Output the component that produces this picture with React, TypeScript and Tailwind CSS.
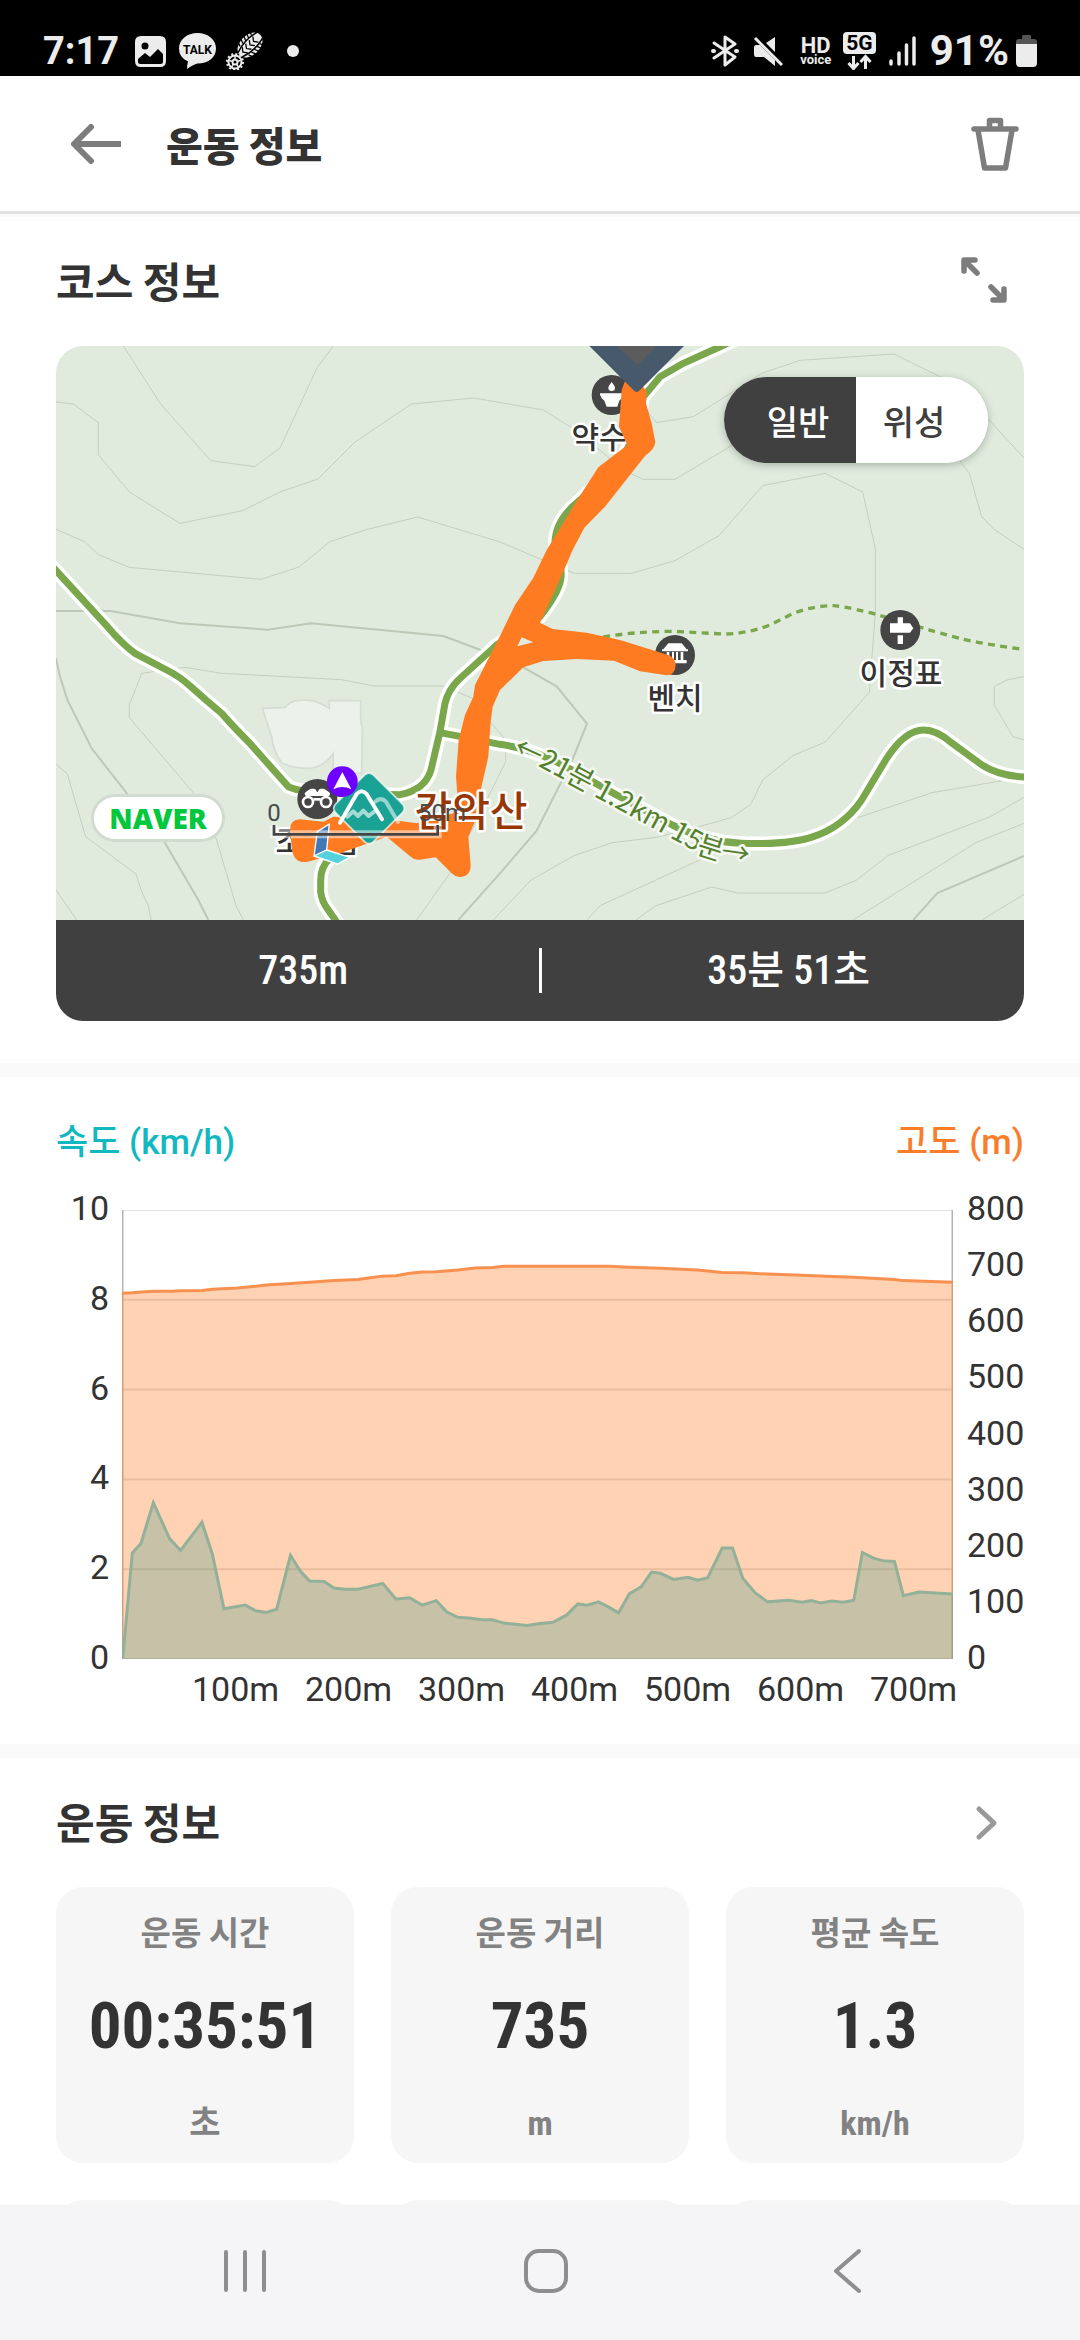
import { useState } from "react";

const hangul = "font-['Noto_Sans_CJK_KR',sans-serif]";
const narrow = "font-['Roboto_Condensed','Liberation_Sans_Narrow','Noto_Sans_CJK_KR',sans-serif]";

function StatusBar() {
  return (
    <div className="flex h-[76px] shrink-0 items-center justify-between bg-black pt-[26px] pr-[43px] pl-[43px] font-['Roboto',sans-serif] text-[#ececec]">
      <div className="flex items-center">
        <span className="w-[76px] text-[38px] leading-none font-bold">7:17</span>
        <svg className="ml-[16px] size-[31px]" viewBox="0 0 31 31" aria-label="사진">
          <path fillRule="evenodd" fill="#ececec" d="M6 0H25Q31 0 31 6V25Q31 31 25 31H6Q0 31 0 25V6Q0 0 6 0ZM10 6.500A3.500 3.500 0 1 0 10 13.500A3.500 3.500 0 1 0 10 6.500ZM3 23V25.500Q3 28 5.500 28H25.500Q28 28 28 25.500V18L23 13L15 21L10 17Z" />
        </svg>
        <svg className="ml-[13px] h-[36px] w-[37px]" viewBox="0 0 37 36" aria-label="카카오톡">
          <path fill="#ececec" d="M18.500 0C29 0 37 6.500 37 15.500S29 30.500 18.500 30.500Q14 31.500 8 36Q8 32 9 28.500Q0 24.500 0 15.500C0 6.500 8 0 18.500 0Z" />
          <text x="18.500" y="20.500" textAnchor="middle" fontSize="12" fontWeight="700" fill="#000" fontFamily="Roboto, sans-serif">TALK</text>
        </svg>
        <svg className="ml-[10px] h-[38px] w-[38px]" viewBox="0 0 38 38" fill="none" stroke="#ececec" aria-label="등산">
          <g transform="rotate(45 24 13)">
            <ellipse cx="24" cy="13" rx="10" ry="14.500" fill="#ececec" stroke="none" />
            <path d="M20 -1Q16 13 21 27M28 -1Q32 13 27 27" stroke="#000" strokeWidth="1.500" />
            <path d="M13 3L18 5M13 7L18 9M13 11L18 13M13 15L18 17M13 19L18 21M35 3L30 5M35 7L30 9M35 11L30 13M35 15L30 17M35 19L30 21" stroke="#000" strokeWidth="1.300" />
            <path d="M20 5L24 8L28 5M20 10L24 13L28 10M20 15L24 18L28 15M20 20L24 23L28 20" stroke="#000" strokeWidth="1.300" />
          </g>
          <circle cx="9" cy="30" r="6.500" strokeWidth="2" />
          <circle cx="9" cy="30" r="8" strokeWidth="2" strokeDasharray="2 2.200" />
          <circle cx="9" cy="30" r="2.500" strokeWidth="2" />
          <path d="M9 24V27M3.500 28.500L6.500 29.500M14.500 28.500L11.500 29.500M5.500 35L7.500 32M12.500 35L10.500 32" strokeWidth="1.500" />
        </svg>
        <span className="ml-[23px] size-[12px] rounded-full bg-[#ececec]" />
      </div>
      <div className="flex items-center">
        <svg className="h-[32px] w-[28px]" viewBox="0 0 28 32" fill="none" stroke="#ececec" strokeWidth="3" strokeLinejoin="round" strokeLinecap="round" aria-label="블루투스">
          <path d="M3 8L24 22L14 30V2L24 9L3 23" />
          <path d="M2 16H3M25 16H26" strokeWidth="4" />
        </svg>
        <svg className="ml-[14px] h-[30px] w-[30px]" viewBox="0 0 30 30" aria-label="무음">
          <path fill="#ececec" d="M3 9H7L22 24V30L11 21H3Q1 21 1 18V12Q1 9 3 9ZM22 1V16L13 7Z" />
          <path d="M2 2L29 29" stroke="#ececec" strokeWidth="3" />
        </svg>
        <div className="ml-[16px] flex w-[34px] flex-col items-center font-bold">
          <span className="text-[22px] leading-[17px]">HD</span>
          <span className="text-[13px] leading-[12px]">voice</span>
        </div>
        <svg className="ml-[10px] h-[38px] w-[33px]" viewBox="0 0 33 38" aria-label="5G">
          <rect width="33" height="22" rx="4" fill="#ececec" />
          <text x="16.500" y="18" textAnchor="middle" fontSize="21" fontWeight="700" fill="#000" fontFamily="Roboto, sans-serif">5G</text>
          <path d="M10.500 24V36M5.500 31L10.500 36.500L15.500 31M22.500 37V25M17.500 30L22.500 24.500L27.500 30" fill="none" stroke="#ececec" strokeWidth="3" />
        </svg>
        <svg className="ml-[13px] h-[30px] w-[27px]" viewBox="0 0 27 30" stroke="#ececec" strokeWidth="3.500" strokeLinecap="round" aria-label="신호">
          <path d="M2 25V28M10 17V28M17.500 9V28M25 2V28" />
        </svg>
        <span className="ml-[14px] text-[42px] leading-none font-bold">91%</span>
        <svg className="ml-[7px] h-[32px] w-[21px]" viewBox="0 0 21 32" aria-label="배터리">
          <path fill="#555" d="M7 0H14Q15 0 15 2V4H18Q21 4 21 7V12H0V7Q0 4 3 4H6V2Q6 0 7 0Z" />
          <path fill="#ececec" d="M0 9H21V28Q21 32 17 32H4Q0 32 0 28Z" />
        </svg>
      </div>
    </div>
  );
}

function Header() {
  return (
    <header className="flex h-[138px] shrink-0 items-center border-b-[3px] border-[#e2e2e2] bg-white pr-[61px] pl-[71px] shadow-[0_3px_0_#fafafa]">
      <button type="button" aria-label="뒤로">
        <svg className="h-[40px] w-[50px]" viewBox="0 0 50 40" fill="none" stroke="#7d7d7d" strokeWidth="6" strokeLinejoin="round">
          <path d="M3 20H50" />
          <path d="M20 3L3 20L20 37" strokeLinecap="round" />
        </svg>
      </button>
      <h1 className="ml-[45px] flex-1 text-[40px] leading-[60px] font-black">운동 정보</h1>
      <button type="button" aria-label="삭제">
        <svg className="h-[54px] w-[48px]" viewBox="0 0 48 54" fill="none" stroke="#7d7d7d" strokeWidth="5.500" strokeLinejoin="round" strokeLinecap="round">
          <path d="M3 12H45M18.500 11V3.500H29.500V11" />
          <path d="M7 13L13.500 51H34.500L41 13" />
        </svg>
      </button>
    </header>
  );
}

const contours = [
  "M250 48L362 222 512 392 644 410 720 354 832 112 880 48",
  "M48 216L100 222 175 278 175 374 268 486 420 580 608 542 720 486 834 447 945 336 1115 222 1302 204 1510 240 1595 293 1710 385 1775 432 1810 448 1905 448 2075 347 2150 300",
  "M48 598L136 636 175 674 268 712 664 748 777 711 870 635 982 598 1133 561 1380 636 1603 730 1775 730 1905 692 2037 617 2168 467 2356 430 2468 486 2506 655 2506 850 2488 1087 2356 1236 2260 1276 2168 1350 2132 1424 2074 1463 1969 1492 1850 1522 1716 1538 1602 1577 1473 1650 1360 1770",
  "M1818 240L1850 278 1960 260 2080 185 2165 130 2280 91 2562 72 2700 140 2845 268 2952 384",
  "M2758 390L2788 430 2825 560 2862 598 2952 658",
  "M1130 1770L1230 1630 1375 1340 1397 1295 1397 1230 1350 1175 1305 1108 1210 1068 1003 1068 905 1049 545 1030 435 1012 305 1030 268 1125 268 1163 470 1400 530 1530 588 1727 610 1770",
  "M48 1302L82 1332 137 1520 288 1632 305 1685 325 1727 333 1770",
  "M48 1680L110 1770",
  "M2952 1040L2901 1050 2863 1069 2863 1126 2919 1220 2952 1230",
  "M2888 1352L2676 1388 2454 1463",
  "M2952 1402L2847 1462 2545 1576 2450 1650 2356 1689 2093 1689 2015 1671 1848 1727 1788 1770",
  "M2952 1480L2808 1538 2439 1770",
  "M2952 1693L2826 1770",
  "M1990 1585L1680 1727 1641 1770",
];

const indexContours = [
  "M48 843L212 843 420 880 684 899 813 880 1210 918 1322 960 1450 1012 1550 1069 1641 1181 1597 1290 1490 1502 1380 1630 1255 1770",
  "M48 985L60 1040 82 1110 155 1255 370 1530 475 1710 505 1770",
  "M2952 1578L2692 1689 2620 1770",
];

const trails = [
  "M30 702L205 893Q245 940 285 970L380 1020Q420 1040 450 1068L500 1112 545 1150Q580 1190 625 1235L745 1370Q780 1385 860 1390L1080 1394Q1155 1380 1173 1320L1200 1205 1215 1120Q1225 1080 1255 1050L1370 945 1500 860Q1555 790 1562 750T1545 640Q1545 570 1620 510L1740 400 1790 300 1810 200 1860 140 1930 100 2045 48 2100 22",
  "M1200 1208L1260 1219 1380 1243Q1480 1256 1587 1315L1721 1390 1897 1485Q2000 1536 2103 1540Q2250 1545 2320 1520Q2410 1490 2465 1410L2537 1290Q2594 1200 2651 1200Q2690 1200 2733 1237L2826 1305Q2880 1340 2970 1342",
  "M870 1585Q842 1610 842 1650V1685Q845 1715 865 1740L900 1790",
];

const route =
  "M1760 140L1810 170 1820 185 1818 220 1835 280 1846 335Q1846 355 1815 378L1695 530 1633 593 1598 660Q1560 750 1500 878L1538 897 1640 908 1740 930 1885 975Q1907 985 1907 1005Q1905 1036 1880 1036L1800 1024 1722 992 1610 987 1510 993 1450 1012 1380 1080 1358 1130 1352 1175 1345 1280 1320 1390 1303 1478 1285 1520 1292 1605Q1292 1641 1258 1641Q1245 1640 1235 1630L1187 1582 1140 1589Q1125 1592 1112 1580L1040 1520 900 1570 800 1596Q762 1600 756 1560L750 1500Q750 1468 780 1468L850 1475 880 1460 1060 1470 1130 1480 1240 1450 1252 1390 1248 1340 1256 1230 1275 1155 1300 1100 1305 1065 1380 918 1425 825 1480 743 1520 660 1615 505 1675 412 1762 345 1737 290 1745 180ZM1445 922L1432 949 1480 937Z";

function MapLabel({ x, y, text }: { x: number; y: number; text: string }) {
  return (
    <text x={x} y={y} textAnchor="middle" fontSize="30" fontWeight="500" fill="#333" stroke="#fff" strokeWidth="5" strokeLinejoin="round" paintOrder="stroke">
      {text}
    </text>
  );
}

function TrailMap() {
  return (
    <svg className="block w-full bg-[#e0ebde]" viewBox="0 0 968 574" fontFamily="'Noto Sans CJK KR', sans-serif" role="img" aria-label="감악산 등산 지도">
      <g transform="scale(.33333) translate(-48 -48)" fill="none">
        <path d={contours.join("")} stroke="#c4cfbf" strokeWidth="3" />
        <path d={indexContours.join("")} stroke="#bdc8b6" strokeWidth="6" />
        <path d="M667 1135L735 1132Q750 1115 770 1112Q820 1103 868 1135V1112H962V1175L967 1195 965 1330H880V1270Q850 1315 800 1315Q760 1315 727 1300Q700 1270 695 1220Z" fill="#ebf2ea" stroke="#d3ddd2" strokeWidth="5" />
        <path d={trails.join("")} stroke="#fff" strokeWidth="42" strokeLinejoin="round" />
        <path d={trails.join("")} stroke="#7aa74b" strokeWidth="21" strokeLinejoin="round" />
        <path d="M1690 921Q1790 904 1900 904L2050 912Q2120 912 2190 885L2260 850Q2320 827 2380 827Q2430 830 2550 865Q2700 910 2770 928Q2860 947 2952 958" stroke="#7aa74b" strokeWidth="10" strokeDasharray="21 16" />
        <g fill="#454545">
          <circle cx="1715" cy="195" r="60" />
          <circle cx="1905" cy="975" r="60" />
          <circle cx="2581" cy="900" r="60" />
        </g>
        <g fill="#fff">
          <path d="M1715 156Q1725 169 1725 173A10 10 0 0 1 1705 173Q1705 169 1715 156ZM1680 190H1750V194Q1748 204 1738 212L1732 230H1700L1693 212Q1682 204 1680 194Z" />
          <path d="M1885 940H1925L1940 958H1870ZM1866 958H1944V964H1866ZM1880 966H1888V990H1880ZM1896 966H1902V990H1896ZM1908 966H1914V990H1908ZM1922 966H1930V990H1922ZM1870 990H1940V1000H1870Z" />
          <path d="M2573 862H2589V880H2610L2620 895 2610 908H2550V880H2573ZM2573 916H2589V942H2573Z" />
        </g>
      </g>
      <MapLabel x={543} y={102} text="약수" />
      <MapLabel x={619} y={363} text="벤치" />
      <MapLabel x={845} y={338} text="이정표" />
      <MapLabel x={261} y={506} text="조망점" />
      <g transform="scale(.33333) translate(-48 -48)">
        <path d={route} fill="#ff7b22" fillRule="evenodd" />
        <path d="M1640 40H1940L1800 180Q1790 192 1780 180Z" fill="#475a6c" />
        <path d="M1730 46H1852L1798 100Q1792 108 1786 100Z" fill="#5c5c5c" />
        <circle cx="832" cy="1407" r="60" fill="#454545" />
        <g fill="none" stroke="#fff">
          <circle cx="804" cy="1416" r="15" strokeWidth="8" />
          <circle cx="858" cy="1416" r="15" strokeWidth="8" />
          <path d="M800 1392L814 1382H822L828 1392H836L842 1382H850L864 1392Z" fill="#fff" strokeWidth="12" strokeLinejoin="round" />
          <path d="M820 1408H842" strokeWidth="8" />
        </g>
      </g>
      <text x="415" y="480" textAnchor="middle" fontSize="41" fontWeight="500" fill="#973704" stroke="#fff" strokeWidth="5" strokeLinejoin="round" paintOrder="stroke">
        감악산
      </text>
      <g transform="scale(.33333) translate(-48 -48)">
        <rect x="907" y="1355" width="160" height="160" rx="18" transform="rotate(45 987 1435)" fill="#1aa394" stroke="#fff" strokeOpacity=".7" strokeWidth="5" />
        <g fill="none" stroke="#fff" strokeWidth="12" strokeLinecap="round" strokeLinejoin="round">
          <path d="M1006 1415Q1022 1400 1038 1415L1074 1476" opacity=".55" />
          <path d="M900 1478L950 1392Q965 1375 980 1392L1026 1468" />
          <path d="M922 1460L940 1444 954 1458 970 1442 986 1458 1004 1444" opacity=".6" />
        </g>
        <circle cx="907" cy="1355" r="46" fill="#6d00ff" />
        <path d="M907 1326L934 1378Q907 1364 880 1378Z" fill="#fff" />
        <g stroke="#fff" strokeWidth="4" strokeLinejoin="round">
          <path d="M868 1482L832 1505 822 1578 860 1560Z" fill="#4377b5" />
          <path d="M822 1578L860 1560 930 1582 892 1602Z" fill="#55d0dd" />
        </g>
        <path d="M702 1485V1513H1193V1485" fill="none" stroke="#fff" strokeOpacity=".5" strokeWidth="24" />
        <path d="M702 1485V1513H1193V1485" fill="none" stroke="#454545" strokeWidth="8" />
      </g>
      <g fontSize="24" fill="#4a4a4a" textAnchor="middle" fontFamily="Roboto, sans-serif">
        <text x="218" y="475">0</text>
        <text x="386" y="475">50m</text>
      </g>
      <path id="trail-label" d="M456 408L482 420 560 462 644 508Q656 516 720 521" fill="none" />
      <text fontSize="28" fill="#557f2f" stroke="#f3f8f0" strokeWidth="5" strokeLinejoin="round" paintOrder="stroke">
        <textPath href="#trail-label">←21분 1.2km 15분→</textPath>
      </text>
    </svg>
  );
}

function MapTypeToggle() {
  const [mode, setMode] = useState("일반");
  return (
    <div className="absolute top-[31px] right-[36px] flex h-[86px] w-[264px] overflow-hidden rounded-full bg-white shadow-[0_2px_8px_rgba(0,0,0,0.25)]">
      {["일반", "위성"].map((name) => (
        <button
          key={name}
          type="button"
          aria-pressed={mode === name}
          onClick={() => setMode(name)}
          className={`flex-1 text-[34px] font-medium ${mode === name ? "bg-[#404040] pl-4 text-white" : "bg-white pr-4 text-[#404040]"}`}
        >
          {name}
        </button>
      ))}
    </div>
  );
}

function CourseSection() {
  return (
    <section className="px-[56px] pb-[42px]">
      <div className="flex h-[132px] items-center justify-between pr-[17px]">
        <h2 className="text-[42px] leading-[60px] font-bold">코스 정보</h2>
        <button type="button" aria-label="지도 확대">
          <svg className="size-[46px]" viewBox="0 0 46 46" fill="none" stroke="#7d7d7d" strokeWidth="5.500" strokeLinecap="round" strokeLinejoin="round">
            <path d="M3 14V3H14M4 4L16 16M43 32V43H32M42 42L30 30" />
            <path d="M3 3H9L3 9ZM43 43H37L43 37Z" fill="#7d7d7d" strokeWidth="3" />
          </svg>
        </button>
      </div>
      <div className="overflow-hidden rounded-[27px]">
        <div className="relative">
          <TrailMap />
          <MapTypeToggle />
          <a href="#naver" className="absolute bottom-[78px] left-[35px] flex h-[48px] w-[134px] items-center justify-center rounded-full border-[3px] border-[#d2dbd0] bg-white font-['Open_Sans',sans-serif] text-[28px] leading-none font-extrabold text-[#03c73c]">
            NAVER
          </a>
        </div>
        <div className={`grid h-[101px] grid-cols-[1fr_3px_1fr] items-center bg-[#404040] text-center text-[40px] font-medium text-white ${narrow}`}>
          <span className="pl-3">735m</span>
          <span className="h-[45px] bg-white" />
          <span className="pl-3">35분 51초</span>
        </div>
      </div>
    </section>
  );
}

const speedPoints =
  "2,1100 30,840 55,817 91,717 138,805 170,834 232,765 262,842 296,977 358,968 388,982 419,986 449,978 489,846 518,885 545,909 587,910 615,926 648,929 685,929 757,915 795,953 835,950 871,968 912,957 943,985 975,998 1013,1000 1045,1004 1075,1004 1109,1012 1142,1015 1175,1018 1213,1013 1251,1010 1291,992 1323,965 1351,968 1383,960 1413,973 1441,987 1473,940 1507,923 1537,887 1563,890 1601,905 1643,900 1671,907 1700,901 1742,828 1772,828 1802,902 1838,938 1874,960 1935,956 1973,961 2002,957 2028,963 2061,958 2093,961 2124,956 2149,839 2181,853 2208,859 2242,861 2268,945 2313,936 2412,941";
const altitudePoints =
  "0,204 30,203 55,201 91,199 145,199 170,198 232,197 262,194 335,191 388,187 419,184 489,180 545,177 615,173 685,170 720,166 757,162 795,161 835,155 871,152 912,151 975,147 1025,142 1075,141 1109,138 1213,138 1413,138 1473,140 1563,143 1671,147 1742,153 1802,154 1874,157 1973,160 2063,163 2124,165 2242,170 2268,173 2412,177";

function ChartSection() {
  return (
    <section className="border-t-[14px] border-[#fafafa] px-[56px] pb-[23px]">
      <div className="flex h-[133px] items-center justify-between font-['Roboto','Noto_Sans_CJK_KR',sans-serif] text-[35px] font-medium">
        <span className="text-[#12b8c0]">속도 (km/h)</span>
        <span className="text-[#fa7d2c]">고도 (m)</span>
      </div>
      <div className="flex h-[449px] font-['Roboto',sans-serif] text-[34px] leading-none">
        <div className="-mt-[2px] mb-[2px] flex w-[66px] flex-col justify-between pr-[13px]">
          {[10, 8, 6, 4, 2, 0].map((v) => (
            <span key={v} className="flex h-0 items-center justify-end">{v}</span>
          ))}
        </div>
        <svg className="h-full min-w-0 flex-1" viewBox="0 0 2412 1100" preserveAspectRatio="none" role="img" aria-label="속도와 고도 그래프">
          <g fill="none" stroke="#e0e0e0" strokeWidth="2">
            <path d="M0 0H2412M0 220H2412M0 440H2412M0 660H2412M0 880H2412M0 1100H2412" vectorEffect="non-scaling-stroke" />
            <path d="M0 0V1100M2412 0V1100" stroke="#b4b4b4" strokeWidth="3" vectorEffect="non-scaling-stroke" />
          </g>
          <polygon points={`0,1100 ${altitudePoints} 2412,1100`} fill="#ff7a20" fillOpacity=".34" />
          <polyline points={altitudePoints} fill="none" stroke="#f8914f" strokeWidth="3" vectorEffect="non-scaling-stroke" />
          <polygon points={`${speedPoints} 2412,1100`} fill="#419d8a" fillOpacity=".3" />
          <polyline points={speedPoints} fill="none" stroke="#93b198" strokeWidth="3" vectorEffect="non-scaling-stroke" />
        </svg>
        <div className="-mt-[2px] mb-[2px] flex w-[71px] flex-col justify-between pl-[14px]">
          {[800, 700, 600, 500, 400, 300, 200, 100, 0].map((v) => (
            <span key={v} className="flex h-0 items-center">{v}</span>
          ))}
        </div>
      </div>
      <div className="mr-[71px] ml-[66px] flex h-[60px] items-center pl-[5.9%] font-['Roboto',sans-serif] text-[34px] leading-none">
        {[100, 200, 300, 400, 500, 600, 700].map((v) => (
          <span key={v} className="flex w-[14.6%] shrink-0 justify-center">{v}m</span>
        ))}
      </div>
      <div className="h-[2px]" />
    </section>
  );
}

const stats = [
  { label: "운동 시간", value: "00:35:51", unit: "초" },
  { label: "운동 거리", value: "735", unit: "m" },
  { label: "평균 속도", value: "1.3", unit: "km/h" },
];

function StatsSection() {
  return (
    <section className="border-t-[14px] border-[#fafafa] px-[56px]">
      <div className="flex h-[129px] items-center justify-between pr-[25px]">
        <h2 className="pb-1 text-[42px] leading-[60px] font-bold">운동 정보</h2>
        <button type="button" aria-label="운동 정보 더보기">
          <svg className="h-[36px] w-[24px]" viewBox="0 0 24 36" fill="none" stroke="#999" strokeWidth="5" strokeLinecap="round" strokeLinejoin="round">
            <path d="M4 4L19 18L4 32" />
          </svg>
        </button>
      </div>
      <div className="grid grid-cols-3 gap-[37px]">
        {stats.map((s) => (
          <div key={s.label} className="flex h-[276px] flex-col items-center rounded-[27px] bg-[#f6f6f6] pt-[18px] text-[#828282]">
            <span className="text-[33px] leading-[52px] font-bold">{s.label}</span>
            <span className={`mt-[28px] text-[65px] leading-[82px] font-bold text-[#333] ${narrow}`}>{s.value}</span>
            <span className={`mt-[30px] text-[34px] leading-[52px] font-bold ${narrow}`}>{s.unit}</span>
          </div>
        ))}
        {stats.map((s) => (
          <div key={s.label} className="h-[276px] rounded-[27px] bg-[#f6f6f6]" />
        ))}
      </div>
    </section>
  );
}

function NavBar() {
  return (
    <nav className="grid h-[135px] shrink-0 grid-cols-3 place-items-center bg-[#f5f5f8] pr-[82px] pb-[3px] pl-[94px]">
      <button type="button" aria-label="최근 앱">
        <svg className="size-[44px]" viewBox="0 0 44 44" stroke="#8e8e8e" strokeWidth="4" strokeLinecap="round">
          <path d="M3 3V41M22 3V41M41 3V41" />
        </svg>
      </button>
      <button type="button" aria-label="홈">
        <svg className="size-[46px]" viewBox="0 0 46 46" fill="none" stroke="#8e8e8e" strokeWidth="4">
          <rect x="3" y="3" width="40" height="40" rx="13" />
        </svg>
      </button>
      <button type="button" aria-label="뒤로 가기">
        <svg className="h-[46px] w-[28px]" viewBox="0 0 28 46" fill="none" stroke="#8e8e8e" strokeWidth="4" strokeLinecap="round" strokeLinejoin="round">
          <path d="M26 3L3 23L26 43" />
        </svg>
      </button>
    </nav>
  );
}

export default function App() {
  return (
    <div className={`flex h-screen flex-col overflow-hidden bg-white text-[#333] ${hangul}`}>
      <StatusBar />
      <Header />
      <main className="min-h-0 flex-1 overflow-hidden">
        <CourseSection />
        <ChartSection />
        <StatsSection />
      </main>
      <NavBar />
    </div>
  );
}
